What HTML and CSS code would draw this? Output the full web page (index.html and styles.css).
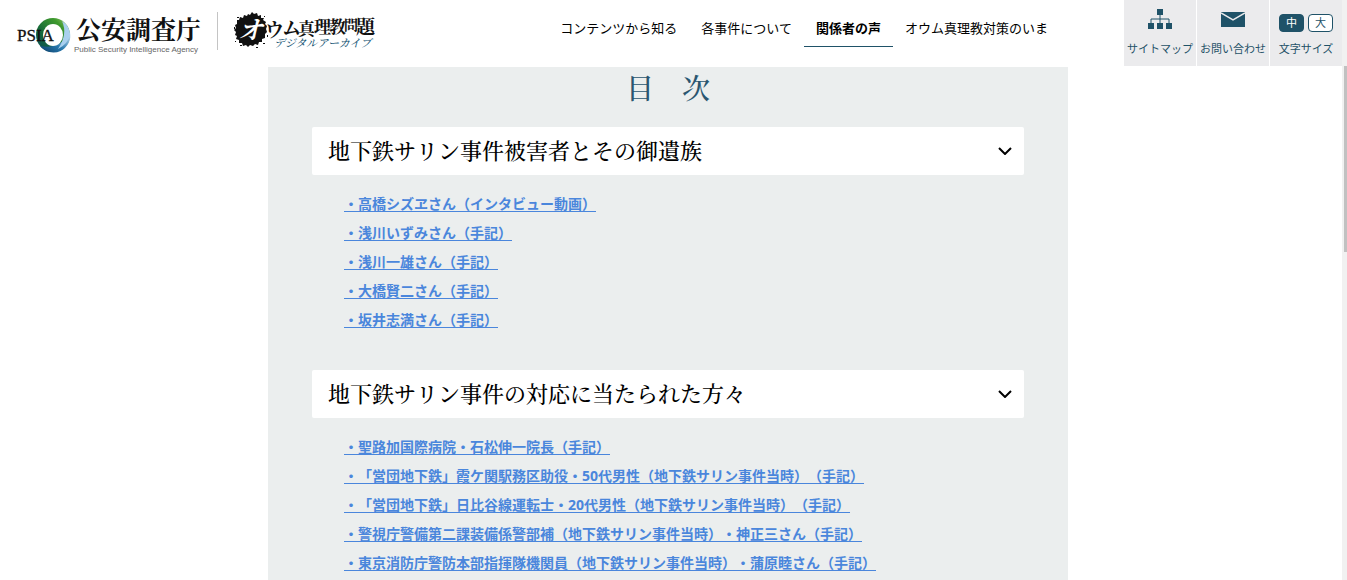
FILE: index.html
```html
<!DOCTYPE html>
<html lang="ja">
  <head>
    <meta charset="UTF-8" />
    <meta name="viewport" content="width=device-width, initial-scale=1.0" />
    <title>関係者の声 | オウム真理教問題デジタルアーカイブ</title>
    <link rel="stylesheet" href="styles.css">
  </head>
  <body>
    <header class="header">
      <a class="logo" href="#" aria-label="公安調査庁">
        <svg width="188" height="40" viewBox="0 0 188 40">
          <defs>
            <linearGradient id="ringGreen" x1="0" y1="1" x2="1" y2="0">
              <stop offset="0" stop-color="#0b4a5c" />
              <stop offset="0.4" stop-color="#176b38" />
              <stop offset="0.75" stop-color="#3f9a2e" />
              <stop offset="1" stop-color="#a8cf7a" />
            </linearGradient>
            <linearGradient id="ringBlue" x1="0" y1="1" x2="1" y2="0">
              <stop offset="0" stop-color="#0a3c66" />
              <stop offset="0.45" stop-color="#2878ad" />
              <stop offset="1" stop-color="#d8ecf8" />
            </linearGradient>
          </defs>
          <circle cx="37" cy="23" r="17" fill="url(#ringGreen)" />
          <path d="M54 20A17 17 0 0 1 24 34Q44 38 54 20Z" fill="url(#ringBlue)" />
          <path d="M46 9Q54 14 54 23Q52 32 42 37Q52 22 46 9Z" fill="#a9d0ee" />
          <ellipse cx="37" cy="23" rx="10" ry="11" fill="#fff" />
          <text class="logo-psia" x="1" y="29">PSIA</text>
          <text class="logo-name" x="60" y="27">公安調査庁</text>
          <text class="logo-sub" x="58" y="40">Public Security Intelligence Agency</text>
        </svg>
      </a>
      <a class="logo logo-archive" href="#" aria-label="オウム真理教問題デジタルアーカイブ">
        <svg width="142" height="38" viewBox="0 0 142 38">
          <path
            d="M3 8L5 8L6 5L9 6L10 3L13 4L14 2L16 3L18 0L20 2L23 1L24 4L27 3L27 6L30 6L29 8L32 10L31 12L33 14L32 17L33 20L31 22L31 26L28 27L28 30L25 30L24 33L21 32L19 34L16 33L14 35L12 33L9 34L8 31L5 31L5 28L2 27L3 24L1 23L2 20L0 18L2 16L1 13L3 12Z"
            fill="#111" />
          <path d="M0 15h1v2H0zM3 5h2v1H3zM29 31h2v1h-2zM33 23h1v2h-1zM6 33h2v1H6zM22 35h2v1h-2zM30 4h1v1h-1zM1 29h1v1H1z" fill="#111" />
          <text class="art-white" x="4" y="27">オ</text>
          <g class="art">
            <text class="art-l" x="31" y="25">ウ</text>
            <text class="art-l" x="48" y="23">ム</text>
            <text class="art-m" x="64" y="23">真</text>
            <text class="art-m" x="80" y="21">理</text>
            <text class="art-m" x="95" y="21">教</text>
            <text class="art-s" x="110" y="18">問</text>
            <text class="art-l" x="122" y="22">題</text>
          </g>
          <text class="art-sub" x="40" y="35">デジタルアーカイブ</text>
        </svg>
      </a>

      <nav class="navbar">
        <a href="#">コンテンツから知る</a>
        <a href="#">各事件について</a>
        <a href="#" class="active">関係者の声</a>
        <a href="#">オウム真理教対策のいま</a>
      </nav>

      <div class="tools">
        <a class="tool" href="#">
          <svg width="24" height="20" viewBox="0 0 24 20" fill="#1f5268">
            <path d="M9 0h6v6H9zM0 14h6v6H0zM9 14h6v6H9zM18 14h6v6h-6z" />
            <path d="M12 6v8M3 14v-4h18v4" fill="none" stroke="#1f5268" />
          </svg>
          <span>サイトマップ</span>
        </a>
        <a class="tool" href="#">
          <svg width="24" height="20" viewBox="0 0 24 20">
            <path d="M0 3h24v15H0z" fill="#1f5268" />
            <path d="M0 4l12 7l12-7" fill="none" stroke="#ebebed" stroke-width="1.5" />
          </svg>
          <span>お問い合わせ</span>
        </a>
        <div class="tool">
          <div class="sizes">
            <button type="button" class="size current">中</button>
            <button type="button" class="size">大</button>
          </div>
          <span>文字サイズ</span>
        </div>
      </div>
    </header>

    <main class="page">
      <div class="contents">
        <h1>目　次</h1>

        <section class="group">
          <h2>
            <button type="button" class="bar">
              地下鉄サリン事件被害者とその御遺族
              <svg width="14" height="8" viewBox="0 0 14 8"><path d="M1 1l6 6l6-6" /></svg>
            </button>
          </h2>
          <ul>
            <li><a href="#">・高橋シズヱさん（インタビュー動画）</a></li>
            <li><a href="#">・浅川いずみさん（手記）</a></li>
            <li><a href="#">・浅川一雄さん（手記）</a></li>
            <li><a href="#">・大橋賢二さん（手記）</a></li>
            <li><a href="#">・坂井志満さん（手記）</a></li>
          </ul>
        </section>

        <section class="group">
          <h2>
            <button type="button" class="bar">
              地下鉄サリン事件の対応に当たられた方々
              <svg width="14" height="8" viewBox="0 0 14 8"><path d="M1 1l6 6l6-6" /></svg>
            </button>
          </h2>
          <ul>
            <li><a href="#">・聖路加国際病院・石松伸一院長（手記）</a></li>
            <li><a href="#">・「営団地下鉄」霞ケ関駅務区助役・50代男性（地下鉄サリン事件当時）（手記）</a></li>
            <li><a href="#">・「営団地下鉄」日比谷線運転士・20代男性（地下鉄サリン事件当時）（手記）</a></li>
            <li><a href="#">・警視庁警備第二課装備係警部補（地下鉄サリン事件当時）・神正三さん（手記）</a></li>
            <li><a href="#">・東京消防庁警防本部指揮隊機関員（地下鉄サリン事件当時）・蒲原睦さん（手記）</a></li>
          </ul>
        </section>
      </div>
    </main>

    <div class="scrollbar"><div class="thumb"></div></div>
  </body>
</html>
```
FILE: styles.css
```css
* {
  box-sizing: border-box;
}

body {
  margin: 0;
  font-family: "Open Sans", "Noto Sans CJK JP", sans-serif;
  text-spacing-trim: space-all;
  background-color: #fff;
  color: #000;
  height: 100vh;
  overflow: hidden;
}

a {
  color: inherit;
  text-decoration: none;
}

.header {
  display: flex;
  align-items: flex-start;
  height: 67px;
  padding: 0 5px 0 16px;
}

.logo {
  padding-top: 12px;
}

.logo svg {
  display: block;
  overflow: visible;
}

.logo-archive {
  margin: 12px 0 0 13px;
  padding: 0 0 0 16px;
  border-left: 1px solid #c4c4c4;
}

.logo-psia {
  font: 17px "Liberation Serif", serif;
  fill: #111;
  stroke: #111;
  stroke-width: 0.3;
}

.logo-name {
  font: 700 25px "Noto Serif CJK JP", "Noto Sans CJK JP", serif;
  fill: #111;
}

.logo-sub {
  font: 8px "Liberation Sans", sans-serif;
  fill: #666;
}

.art,
.art-white {
  font-family: "Noto Serif CJK JP", "Noto Sans CJK JP", serif;
  font-weight: 700;
  fill: #111;
}

.art-white {
  font-size: 25px;
  font-style: italic;
  fill: #fff;
}

.art-l {
  font-size: 19px;
}

.art-m {
  font-size: 17px;
}

.art-s {
  font-size: 14px;
}

.art-sub {
  font: italic 500 11px "Noto Serif CJK JP", "Noto Sans CJK JP", serif;
  fill: #245a78;
}

.navbar {
  display: flex;
  margin: 11px 64px 0 auto;
}

.navbar a {
  padding: 0 12px;
  font-size: 13px;
  line-height: 35px;
  white-space: nowrap;
  border-bottom: 1px solid transparent;
}

.navbar .active {
  font-weight: 700;
  border-color: #1f5268;
}

.tools {
  display: flex;
  gap: 1px;
}

.tool {
  display: flex;
  flex-direction: column;
  align-items: center;
  gap: 12px;
  width: 72px;
  height: 67px;
  padding-top: 9px;
  background-color: #ebebed;
  border-bottom: 1px solid #fff;
  color: #1f5268;
  font-size: 11px;
  line-height: 16px;
  white-space: nowrap;
}

.sizes {
  display: flex;
  gap: 4px;
  height: 20px;
  padding-top: 5px;
}

.size {
  width: 25px;
  height: 18px;
  padding: 0;
  border: 1px solid #1f5268;
  border-radius: 4px;
  background-color: #fff;
  color: #1f5268;
  font-family: inherit;
  font-size: 11px;
  line-height: 14px;
}

.size.current {
  background-color: #1f5268;
  color: #fff;
}

.page {
  height: calc(100vh - 67px);
  padding-right: 11px;
  overflow: hidden;
}

.contents {
  max-width: 800px;
  margin: 0 auto;
  padding: 0 44px;
  background-color: #ebeeee;
}

h1 {
  margin: 0 0 20px;
  font-family: "Noto Serif CJK JP", "Noto Sans CJK JP", serif;
  font-size: 28px;
  font-weight: 500;
  line-height: 40px;
  text-align: center;
  color: #2a5670;
}

h2 {
  margin: 0;
}

.group {
  padding-bottom: 36px;
}

.bar {
  display: flex;
  align-items: center;
  justify-content: space-between;
  width: 100%;
  height: 48px;
  padding: 0 12px 4px 16px;
  border: none;
  border-radius: 2px;
  background-color: #fff;
  color: #000;
  font-family: "Noto Serif CJK JP", "Noto Sans CJK JP", serif;
  font-size: 22px;
  font-weight: 500;
  text-spacing-trim: inherit;
}

.bar svg {
  margin-top: 4px;
  fill: none;
  stroke: #000;
  stroke-width: 2;
}

ul {
  margin: 0;
  padding: 14px 0 0 32px;
  list-style: none;
}

li {
  height: 29px;
  font-size: 14px;
  font-weight: 700;
  line-height: 29px;
}

li a {
  color: #4a86dc;
  text-decoration: underline;
  text-underline-offset: 2px;
}

.scrollbar {
  position: fixed;
  top: 0;
  right: 0;
  bottom: 0;
  width: 5px;
  padding: 66px 0 0 2px;
  background-color: #f1f1f1;
}

.thumb {
  height: 32vh;
  background-color: #c1c1c1;
}
```
